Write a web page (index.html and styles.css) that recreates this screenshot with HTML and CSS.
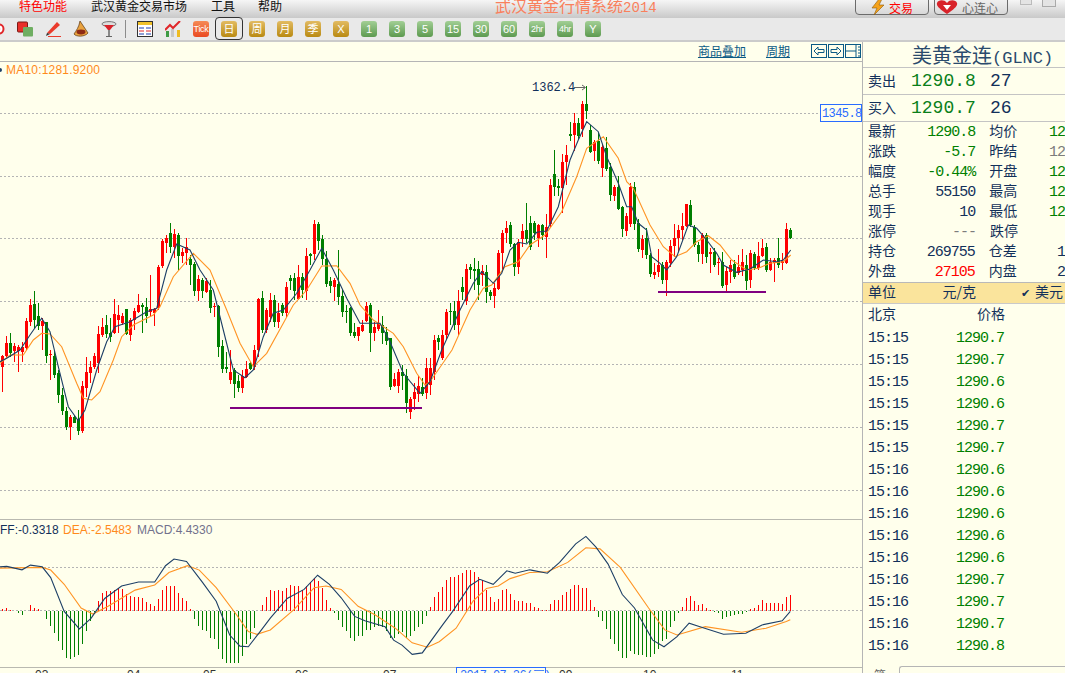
FILE: index.html
```html
<!DOCTYPE html>
<html lang="zh">
<head>
    <meta charset="utf-8">
    <title>武汉黄金行情系统2014</title>
    <link rel="stylesheet" href="styles.css">
</head>
<body>
    <!-- 菜单 -->
    <div class="menubar">
        <span class="menu menu-on">特色功能</span>
        <span class="menu">武汉黄金交易市场</span>
        <span class="menu">工具</span>
        <span class="menu menu-last">帮助</span>
        <span class="apptitle">武汉黄金行情系统<span class="apptitle-num">2014</span></span>
        <span class="topbtn topbtn-trade">
            <svg width="14" height="16" viewBox="0 0 14 16"><path d="M8 0 L1 9 H6 L3 16 L13 6 H8 L11 0 Z" fill="#f5a21a" stroke="#8a5a10" stroke-width=".6"/></svg>
            <span class="trade-txt">交易</span>
        </span>
        <span class="topbtn topbtn-heart">
            <svg width="22" height="14" viewBox="0 0 22 14"><path d="M11 14 C4 9 0 6 1 3 C2 0 8 -1 11 3 C14 -1 20 0 21 3 C22 6 18 9 11 14 Z" fill="#d8232a"/><path d="M7 5 H15 L11 10 Z" fill="#fff"/></svg>
            <span class="heart-txt">心连心</span>
        </span>
        <span class="winbtn"></span>
        <span class="winbtn winbtn-max"></span>
    </div>

    <!-- 工具栏 -->
    <div class="toolbar">
        <svg class="icon" viewBox="0 0 16 16"><circle cx="10" cy="8" r="4.5" fill="#fff" stroke="#e0262a" stroke-width="2"/><circle cx="10" cy="8" r="1.2" fill="#e0262a"/></svg>
        <svg class="icon" viewBox="0 0 16 16"><rect x="0.5" y="1" width="10" height="10" rx="1" fill="#e8302a" stroke="#7a1a16"/><rect x="6" y="6" width="10" height="9.5" rx="1" fill="#6fae62"/></svg>
        <svg class="icon" viewBox="0 0 16 16"><path d="M2 12 L12 1 L15 4 L5 13 Z" fill="#ea3b2c"/><path d="M2 12 L5 13 L1 15 Z" fill="#333"/><rect x="3" y="15" width="13" height="1" fill="#ea3b2c"/></svg>
        <svg class="icon" viewBox="0 0 16 16"><path d="M7 0 L15 12 C12 16 3 16 1 13 C3 10 6 6 7 0 Z" fill="#e9a33f" stroke="#5a3410" stroke-width=".7"/><ellipse cx="8" cy="11" rx="4.5" ry="2.4" fill="#8e2a14"/></svg>
        <svg class="icon" viewBox="0 0 16 16"><ellipse cx="8" cy="3" rx="7" ry="2.4" fill="#ddd" stroke="#777"/><path d="M3 4 H13 L9 9 H7 Z" fill="#d9222a"/><rect x="7" y="9" width="2" height="6" fill="#888"/><rect x="5" y="15" width="6" height="1" fill="#666"/></svg>
        <span class="tool-sep"></span>
        <svg class="icon" viewBox="0 0 16 16"><rect x="0.5" y="0.5" width="15" height="15" fill="#fff" stroke="#333"/><rect x="1" y="1" width="14" height="3" fill="#f1c22b"/><path d="M2 7 H7 M9 7 H14 M2 13 H7 M9 13 H14" stroke="#1a3fb0"/><path d="M2 10 H7 M9 10 H14" stroke="#e0262a"/></svg>
        <svg class="icon" viewBox="0 0 16 16"><rect x="1" y="10" width="3" height="6" fill="#3e9a45"/><rect x="6" y="8" width="3" height="8" fill="#c8c8c8"/><rect x="12" y="9" width="3" height="7" fill="#eebb22"/><path d="M0 9 L5 4 L8 7 L15 0" fill="none" stroke="#e0262a" stroke-width="2"/></svg>
        <span class="kbtn kbtn-tick">Tick</span>
        <span class="kbtn kbtn-gold kbtn-on">日</span>
        <span class="kbtn kbtn-gold">周</span>
        <span class="kbtn kbtn-gold">月</span>
        <span class="kbtn kbtn-gold">季</span>
        <span class="kbtn kbtn-gold">X</span>
        <span class="kbtn kbtn-green">1</span>
        <span class="kbtn kbtn-green">3</span>
        <span class="kbtn kbtn-green">5</span>
        <span class="kbtn kbtn-green">15</span>
        <span class="kbtn kbtn-green">30</span>
        <span class="kbtn kbtn-green">60</span>
        <span class="kbtn kbtn-green kbtn-small">2hr</span>
        <span class="kbtn kbtn-green kbtn-small">4hr</span>
        <span class="kbtn kbtn-green">Y</span>
    </div>

    <div class="main">
        <div class="chart">
            <div class="chart-head">
                <span class="headlink">商品叠加</span>
                <span class="headlink">周期</span>
                <span class="headicons">
                    <svg width="16" height="14" viewBox="0 0 16 14"><rect x=".5" y=".5" width="15" height="13" fill="none" stroke="#0b5a85"/><path d="M3 7 L7 3 V5.5 H13 V8.5 H7 V11 Z" fill="none" stroke="#0b5a85"/></svg>
                    <svg width="16" height="14" viewBox="0 0 16 14"><rect x=".5" y=".5" width="15" height="13" fill="none" stroke="#0b5a85"/><path d="M13 7 L9 3 V5.5 H3 V8.5 H9 V11 Z" fill="none" stroke="#0b5a85"/></svg>
                    <svg width="16" height="14" viewBox="0 0 16 14"><rect x=".5" y=".5" width="15" height="13" fill="none" stroke="#0b5a85"/><path d="M1 7 H11 M11 1 V13 M13 3 H15 M13 6 H15 M13 9 H15 M13 12 H15" stroke="#0b5a85"/></svg>
                </span>
            </div>
            <svg id="plot" class="plot" width="862" height="611" viewBox="0 62 862 611"></svg>
        </div>

        <div class="quote">
            <div class="quote-name">美黄金连<span class="quote-code">(GLNC)</span></div>
            <div class="ask-row"><span class="ask-label">卖出</span><span class="ask-price">1290.8</span><span class="ask-vol">27</span></div>
            <div class="ask-row"><span class="ask-label">买入</span><span class="ask-price">1290.7</span><span class="ask-vol">26</span></div>

            <div class="stats">
                <div class="stat"><span class="stat-l">最新</span><span class="stat-v c-green">1290.8</span><span class="stat-l2">均价</span><span class="stat-x c-green">12</span></div>
                <div class="stat"><span class="stat-l">涨跌</span><span class="stat-v c-green">-5.7</span><span class="stat-l2">昨结</span><span class="stat-x c-gray">12</span></div>
                <div class="stat"><span class="stat-l">幅度</span><span class="stat-v c-green">-0.44%</span><span class="stat-l2">开盘</span><span class="stat-x c-green">12</span></div>
                <div class="stat"><span class="stat-l">总手</span><span class="stat-v">55150</span><span class="stat-l2">最高</span><span class="stat-x c-green">12</span></div>
                <div class="stat"><span class="stat-l">现手</span><span class="stat-v">10</span><span class="stat-l2">最低</span><span class="stat-x c-green">12</span></div>
                <div class="stat"><span class="stat-l">涨停</span><span class="stat-v c-gray">---</span><span class="stat-l2">跌停</span><span class="stat-x"></span></div>
                <div class="stat"><span class="stat-l">持仓</span><span class="stat-v">269755</span><span class="stat-l2">仓差</span><span class="stat-x stat-x-far">1</span></div>
                <div class="stat"><span class="stat-l">外盘</span><span class="stat-v c-red">27105</span><span class="stat-l2">内盘</span><span class="stat-x stat-x-far">2</span></div>
            </div>

            <div class="unitbar">
                <span class="stat-l">单位</span>
                <span class="unit-val">元/克</span>
                <span class="unit-check">✔</span>
                <span class="unit-cur">美元</span>
            </div>

            <div class="tick-head"><span class="stat-l">北京</span><span class="tick-price-h">价格</span></div>
            <div class="tick"><span class="tick-t">15:15</span><span class="tick-p">1290.7</span></div>
            <div class="tick"><span class="tick-t">15:15</span><span class="tick-p">1290.7</span></div>
            <div class="tick"><span class="tick-t">15:15</span><span class="tick-p">1290.6</span></div>
            <div class="tick"><span class="tick-t">15:15</span><span class="tick-p">1290.6</span></div>
            <div class="tick"><span class="tick-t">15:15</span><span class="tick-p">1290.7</span></div>
            <div class="tick"><span class="tick-t">15:15</span><span class="tick-p">1290.7</span></div>
            <div class="tick"><span class="tick-t">15:16</span><span class="tick-p">1290.6</span></div>
            <div class="tick"><span class="tick-t">15:16</span><span class="tick-p">1290.6</span></div>
            <div class="tick"><span class="tick-t">15:16</span><span class="tick-p">1290.6</span></div>
            <div class="tick"><span class="tick-t">15:16</span><span class="tick-p">1290.6</span></div>
            <div class="tick"><span class="tick-t">15:16</span><span class="tick-p">1290.6</span></div>
            <div class="tick"><span class="tick-t">15:16</span><span class="tick-p">1290.7</span></div>
            <div class="tick"><span class="tick-t">15:16</span><span class="tick-p">1290.7</span></div>
            <div class="tick"><span class="tick-t">15:16</span><span class="tick-p">1290.7</span></div>
            <div class="tick"><span class="tick-t">15:16</span><span class="tick-p">1290.8</span></div>

            <div class="tabrow"><span class="tab-l">笔</span><span class="tab-box"></span></div>
        </div>
    </div>

    <script src="chart.js"></script>
</body>
</html>
```

FILE: styles.css
```css
html, body {
    margin: 0;
    padding: 0;
    width: 1065px;
    height: 673px;
    overflow: hidden;
    background: #ffffec;
    font-family: "Noto Sans CJK SC", sans-serif;
    font-size: 12px;
    color: #12305a;
}

/* top */
.menubar {
    display: flex;
    align-items: flex-start;
    height: 18px;
    padding-left: 19px;
    overflow: hidden;
    background: linear-gradient(#f6f6f6, #c9c9c9);
}
.menu {
    margin-right: 24px;
    line-height: 12px;
    color: #111;
}
.menu-on { color: #f00; }
.menu-last { margin-right: 0; margin-left: -1px; }
.apptitle {
    margin-left: 213px;
    margin-top: -3px;
    width: 164px;
    font-size: 16px;
    line-height: 17px;
    white-space: nowrap;
    color: #f9805c;
}
.apptitle-num { font-family: "Liberation Mono", monospace; font-size: 14px; }
.topbtn {
    display: flex;
    align-items: center;
    justify-content: center;
    gap: 4px;
    box-sizing: border-box;
    width: 74px;
    height: 21px;
    margin-top: -6px;
    margin-left: 5px;
    padding-top: 5px;
    border: 1px solid #6b6b6b;
    border-radius: 4px;
    background: linear-gradient(#f8f8f8, #d8d8d8);
    font-size: 12px;
}
.topbtn-trade { margin-left: 196px; }
.topbtn-heart { padding-right: 8px; }
.trade-txt { color: #f00; }
.heart-txt { color: #666; }
.winbtn {
    box-sizing: border-box;
    width: 12px;
    height: 9px;
    margin-top: -4px;
    margin-left: 12px;
    border: 1px solid #bbb;
    border-top: 0;
    background: #e4e4e4;
}
.winbtn-max { margin-left: 10px; width: 14px; height: 11px; border: 1px solid #aaa; }

.toolbar {
    display: flex;
    align-items: center;
    gap: 12px;
    height: 22px;
    margin-left: -11px;
    width: 1076px;
    background: #e9e9e9;
}
.icon { width: 16px; height: 16px; flex: none; }
.tool-sep {
    width: 1px;
    height: 18px;
    margin: 0 -1px 0 -4px;
    background: #8c8c8c;
}
.kbtn {
    position: relative;
    flex: none;
    width: 16px;
    height: 16px;
    border-radius: 3px;
    text-align: center;
    font-family: "Liberation Sans", "Noto Sans CJK SC", sans-serif;
    font-size: 11px;
    line-height: 16px;
    color: #fff;
}
.kbtn-gold { background: linear-gradient(#e2bb62, #b98a12); }
.kbtn-green { background: linear-gradient(#a2cf95, #5d9a50); }
.kbtn-tick {
    background: linear-gradient(#f58a55, #ea4a22);
    font-size: 9px;
    letter-spacing: -.3px;
}
.kbtn-small { font-size: 9px; letter-spacing: -.4px; }
.kbtn-on::before {
    content: "";
    position: absolute;
    top: -4px;
    bottom: -3px;
    left: -6px;
    right: -6px;
    border: 1px solid #333;
    border-radius: 4px;
    background: transparent;
}

.main {
    display: flex;
    height: 631px;
    border-top: 2px solid #cbcbcb;
}

/* chart */
.chart { width: 862px; flex: none; }
.chart-head {
    display: flex;
    justify-content: flex-end;
    align-items: center;
    box-sizing: border-box;
    height: 20px;
    border-bottom: 1px solid #b5b5b5;
    padding-top: 2px;
}
.headlink {
    margin-right: 20px;
    margin-bottom: 4px;
    color: #0b5a85;
    text-decoration: underline;
    line-height: 14px;
}
.headlink + .headlink { margin-right: 21px; }
.headicons { display: flex; gap: 1px; height: 14px; margin-top: -3px; margin-right: 1px; }
.plot { display: block; }
.grid { stroke: #b4b4b4; stroke-dasharray: 2 2; }
.rule { stroke: #b9b9b0; }
.up { fill: #f00; }
.down { fill: #007f00; }
.ma5 { fill: none; stroke: #1d3f66; stroke-width: 1.1; }
.ma10 { fill: none; stroke: #ff9424; stroke-width: 1.1; }
.mark { stroke: #800080; stroke-width: 2; shape-rendering: crispEdges; }
.lbl { font-family: "Liberation Sans", sans-serif; font-size: 12px; }
.lbl-ma { fill: #ff8a1c; }
.lbl-wide { letter-spacing: .2px; }
.lbl-dif { fill: #12305a; }
.lbl-mac { fill: #72728c; }
.lbl-price { font-family: "Liberation Mono", monospace; font-size: 12px; fill: #12305a; }
.lbl-axis { font-family: "Liberation Sans", sans-serif; font-size: 12px; fill: #333; }
.tag-box { fill: #ffffec; stroke: #2a6cff; }
.tag-txt { font-family: "Liberation Mono", monospace; font-size: 12px; letter-spacing: -.6px; fill: #2a6cff; }

/* quote panel */
.quote {
    box-sizing: border-box;
    width: 203px;
    flex: none;
    border-left: 1px solid #b5b5b5;
    font-size: 14px;
    overflow: hidden;
}
.quote-name {
    height: 25px;
    padding-left: 49px;
    font-size: 20px;
    line-height: 25px;
    color: #2a4a6c;
    white-space: nowrap;
}
.quote-code { font-family: "Liberation Mono", monospace; font-size: 17px; }
.ask-row {
    display: flex;
    align-items: center;
    height: 26px;
    padding-left: 5px;
    border-top: 1px solid #c4c4c4;
}
.ask-label { width: 43px; line-height: 26px; margin-bottom: 3px; }
.ask-price {
    width: 79px;
    margin-bottom: 1px;
    font-family: "Liberation Mono", monospace;
    font-size: 18px;
    color: #0a7f1a;
}
.ask-vol { margin-bottom: 1px; font-family: "Liberation Mono", monospace; font-size: 18px; }
.stats { border-top: 1px solid #c4c4c4; }
.stat {
    display: flex;
    align-items: center;
    height: 20px;
    padding-left: 5px;
    white-space: nowrap;
}
.stat-l { width: 42px; line-height: 20px; margin-bottom: 4px; }
.stat-v {
    width: 66px;
    text-align: right;
    font-family: "Liberation Mono", monospace;
    font-size: 15px;
    letter-spacing: -1px;
}
.stat-l2 { width: 60px; margin-left: 14px; margin-bottom: 4px; }
.stat-x {
    font-family: "Liberation Mono", monospace;
    font-size: 15px;
    letter-spacing: -1px;
}
.stat-x-far { margin-left: 9px; }
.c-green { color: #007f00; }
.c-red { color: #f00; }
.c-gray { color: #7c7c7c; }
.unitbar {
    display: flex;
    align-items: center;
    box-sizing: border-box;
    height: 22px;
    padding-left: 5px;
    background: #fae49c;
    border-top: 1px solid #b9b9b9;
    border-bottom: 1px solid #c9c9c9;
    white-space: nowrap;
}
.unit-val { width: 66px; margin-bottom: 4px; text-align: right; font-family: "Noto Sans CJK SC", sans-serif; }
.unit-check { margin-left: 45px; width: 14px; font-size: 11px; font-family: "DejaVu Sans", sans-serif; }
.unit-cur { margin-bottom: 4px; }
.tick-head { display: flex; height: 23px; padding-left: 5px; align-items: center; }
.tick-head .stat-l { margin-bottom: 6px; }
.tick-price-h { margin-left: 67px; margin-bottom: 6px; }
.tick {
    display: flex;
    align-items: center;
    height: 22px;
    padding-left: 5px;
    font-family: "Liberation Mono", monospace;
    font-size: 15px;
    letter-spacing: -1px;
}
.tick-t { width: 88px; }
.tick-p { color: #007f00; }
.tabrow { display: flex; align-items: flex-start; margin-top: 9px; padding-left: 11px; }
.tab-l { width: 25px; font-size: 12px; line-height: 12px; color: #666; margin-top: 3px; }
.tab-box {
    flex: 1;
    height: 20px;
    border: 1px solid #b5b5b5;
    border-radius: 3px 0 0 0;
    border-right: 0;
}
```

FILE: chart.js
```js
// 蜡烛图数据 [高, 实体上, 实体下, 低, 涨跌]
// left 的 y 是放大三倍后读的, y = 210 + v / 3
var left = [
    [435,437,472,545,'r'],[378,398,438,445,'r'],[370,398,430,440,'g'],[398,407,423,455,'r'],[405,410,422,485,'r'],
    [395,412,425,455,'r'],[323,333,413,420,'r'],[267,285,335,347,'r'],[243,282,330,355,'g'],[278,318,348,360,'g'],
    [323,332,348,420,'r'],[335,337,438,458,'g'],[420,432,435,510,'r'],[420,438,495,505,'g'],[480,490,555,580,'g'],
    [535,556,603,615,'g'],[590,603,650,660,'g'],[615,622,650,690,'r'],[615,622,640,640,'g'],[600,628,663,675,'g'],
    [513,528,663,670,'r'],[440,487,535,560,'r'],[453,472,490,520,'r'],[430,438,472,478,'r'],[348,372,460,490,'r'],
    [325,350,375,380,'r'],[315,345,372,385,'g'],[325,370,382,395,'g'],[267,312,368,372,'r'],[285,315,330,370,'r'],
    [310,318,338,345,'r'],[297,297,372,375,'g'],[325,330,375,392,'r'],[295,303,330,360,'r'],[252,285,305,310,'r'],
    [278,285,290,368,'g'],[265,290,318,340,'g'],[195,298,305,318,'r'],[295,298,310,348,'r'],[165,170,295,300,'r'],
    [88,92,168,175,'r'],[75,83,98,130,'r'],[40,68,110,130,'g'],[57,72,110,145,'r'],[70,75,137,180,'g'],
    [115,125,137,160,'r'],[85,112,130,165,'r'],[135,148,165,225,'g'],[155,163,243,258,'g'],[195,207,243,273,'r'],
    [205,210,243,265,'g'],[205,212,245,250,'r'],[210,240,293,310,'g'],[280,287,290,322,'r'],[285,288,410,440,'g'],
    [390,408,477,490,'g'],[425,472,477,490,'g'],[420,485,510,522,'r'],[475,480,522,563,'g'],[495,513,533,545,'g'],
    [480,497,533,548,'r'],[452,477,500,505,'r'],[455,458,477,480,'g'],[405,420,470,480,'r'],[265,267,420,440,'r'],
    [243,265,360,368,'g'],[295,300,360,370,'r'],[250,270,322,335,'r'],[255,270,335,350,'g'],[280,310,335,355,'r'],
    [280,285,310,318,'g'],[215,232,310,320,'r'],[195,203,213,240,'g'],[190,205,243,270,'g'],[165,202,268,270,'r'],
    [190,202,240,265,'g'],[115,137,243,270,'r'],[130,133,138,165,'g'],[30,42,133,150,'r'],[37,43,92,120,'g'],
    [75,88,148,165,'g'],[122,148,222,232,'g'],[200,212,228,250,'g'],[205,210,230,273,'r'],[120,222,262,285,'g'],
    [240,258,305,322,'g'],[285,302,305,340,'g'],[290,295,370,378,'g'],[340,365,378,385,'g'],[350,352,378,392,'r'],
    [330,345,362,365,'r'],[275,288,333,335,'r'],[278,285,368,425,'g'],[335,352,368,392,'r'],[300,340,358,362,'r'],
    [318,345,368,402,'g'],[350,365,392,405,'g'],[385,385,530,540,'g'],[488,507,528,530,'r'],[478,487,527,550,'r'],
    [465,487,497,540,'g'],[478,497,578,610,'g'],[560,567,605,628,'r'],[520,545,568,600,'r'],[498,528,552,575,'r'],
    [505,532,552,558,'g'],[445,475,550,568,'r']
];
// right 的 y 就是屏幕坐标
var right = [
    [358,368,385,395,'r'],[335,340,372,380,'r'],[335,338,342,350,'g'],[330,335,358,360,'r'],[309,312,335,340,'r'],
    [303,311,312,325,'g'],[301,311,325,330,'g'],[290,301,325,335,'r'],[277,287,292,300,'g'],[264,269,301,305,'r'],
    [264,267,270,279,'g'],[258,269,271,290,'g'],[261,269,285,300,'g'],[265,271,275,286,'r'],[265,272,292,303,'g'],
    [290,292,296,300,'g'],[283,288,296,308,'r'],[250,253,289,290,'r'],[230,233,253,270,'r'],[221,228,233,243,'r'],
    [222,225,244,247,'g'],[243,244,267,276,'g'],[239,242,267,274,'r'],[224,231,239,247,'r'],[203,230,239,243,'g'],
    [216,223,247,250,'g'],[221,223,233,240,'g'],[224,225,238,247,'r'],[224,225,235,240,'g'],[214,227,237,258,'r'],
    [179,185,224,227,'r'],[150,174,187,196,'g'],[179,186,188,196,'g'],[154,162,188,213,'r'],[145,155,162,185,'r'],
    [122,134,136,141,'g'],[113,123,135,151,'r'],[118,123,136,140,'g'],[101,104,129,137,'r'],[86,104,111,119,'g'],
    [125,130,152,153,'g'],[140,142,151,161,'r'],[132,141,161,164,'g'],[144,147,168,177,'r'],[137,148,169,171,'g'],
    [163,167,195,201,'g'],[185,187,196,201,'r'],[176,187,209,210,'g'],[206,207,229,237,'g'],[213,216,231,236,'r'],
    [183,187,224,227,'r'],[182,187,224,230,'g'],[219,223,249,252,'g'],[235,239,250,258,'r'],[228,238,255,259,'g'],
    [253,255,274,277,'g'],[263,272,275,279,'r'],[249,265,272,277,'r'],[262,265,280,284,'g'],[260,262,280,296,'r'],
    [240,246,263,267,'r'],[224,238,246,257,'r'],[225,230,238,252,'r'],[213,226,230,240,'r'],[204,204,226,227,'r'],
    [200,205,225,227,'g'],[225,227,245,247,'g'],[242,245,254,262,'g'],[233,235,254,264,'r'],[233,235,257,263,'g'],
    [248,252,254,273,'r'],[248,252,265,267,'g'],[258,262,263,275,'r'],[252,262,286,288,'g'],[267,271,285,293,'r'],
    [260,265,272,283,'r'],[260,264,277,279,'g'],[255,267,273,275,'r'],[249,262,270,276,'r'],[255,265,281,290,'g'],
    [250,253,280,288,'r'],[252,254,268,270,'g'],[242,256,268,270,'r'],[239,248,256,257,'r'],[243,247,270,272,'g'],
    [258,262,270,271,'r'],[258,260,263,282,'r'],[238,258,265,268,'g'],[253,261,263,270,'r'],[223,229,263,264,'r'],
    [228,230,238,239,'g']
];

// MACD 柱 (放大坐标里的高度, 正红负绿)
var bars = [3,6,2,1,-8,-12,-2,15,8,4,1,
    -26,-45,-68,-90,-118,-140,-143,-138,-133,-100,-60,-30,-3,
    28,52,58,58,62,68,65,50,42,40,40,38,25,20,14,35,62,72,72,72,52,36,28,4,
    -26,-45,-58,-62,-82,-85,-115,-143,-155,-155,-155,-155,-135,-100,-85,-52,0,
    15,40,60,58,60,58,68,76,74,72,62,74,85,95,88,68,30,7,
    -8,-28,-50,-62,-82,-90,-75,-75,-58,-58,-50,-45,-50,-60,-80,-80,-70,-65,-80,-75,-62,-50,-40,-15,10,
    40,55,70,90,100,100,105,110,120,120,115,100,90,60,40,25,35,60,63,50,30,28,28,22,22,10,8,2,2,20,30,30,45,55,65,75,75,68,68,32,10,
    -20,-32,-55,-85,-100,-120,-142,-142,-120,-128,-132,-132,-138,-138,-130,-115,-90,-85,-50,-30,-8,
    10,38,42,28,15,20,8,2,-3,-8,-25,-20,-15,-12,-10,-10,-3,5,8,15,30,22,22,22,22,20,40,45];

// 均线 [x, y] 放大坐标
var ma5a = [0,455,20,445,60,420,90,375,125,325,150,365,175,470,205,590,235,632,255,600,290,480,320,395,345,350,390,335,440,305,470,295,500,180,530,102,570,120,600,180,640,240,670,360,700,480,735,503,760,480,790,380,820,310,850,300,890,250,930,180,965,115,1000,180,1040,265,1080,340,1140,340,1170,395,1210,490,1260,550,1290,515];
var ma5b = [35,840,90,720,130,640,155,605,190,640,215,610,240,540,265,517,290,522,320,487,350,483,385,410,420,270,445,210,470,155,505,185,530,260,565,340,590,410,605,410,625,460,650,480,665,560,690,580,710,600,740,560,775,465,800,475,830,510,860,550,880,585,920,607,960,597,1000,570,1040,575,1060,570,1082,540];
var ma10a = [0,460,30,435,70,435,100,390,125,370,150,372,185,410,230,520,250,565,275,570,300,545,340,450,365,380,400,345,460,315,480,290,520,200,580,130,630,180,680,300,720,400,760,470,800,430,850,340,880,285,920,240,965,168,1010,167,1050,220,1080,285,1120,330,1180,370,1210,410,1250,490,1275,525,1290,515];
var ma10b = [66,840,120,720,160,655,185,645,225,590,265,575,300,525,345,495,395,425,440,320,470,235,520,200,565,265,590,335,610,355,660,465,700,530,735,560,770,545,800,515,835,497,870,525,905,570,950,600,985,595,1020,580,1060,575,1082,555];

var difa = [0,168,20,167,65,177,90,163,125,168,150,200,190,300,235,352,270,320,310,262,360,225,410,213,458,213,490,165,515,145,552,152,600,215,640,270,680,370,710,403,735,405,770,360,800,320,850,262,900,235,940,193,975,220,1010,260,1050,315,1080,328,1140,345,1165,385,1190,400,1220,427,1250,423,1310,340,1340,300,1390,225,1420,205,1460,220,1500,180,1525,187,1568,177];
var difb = [250,178,290,187,320,155,360,100,385,78,410,110,440,160,475,250,505,290,550,385,578,405,610,375,640,335,665,345,725,368,780,365,820,340,870,328,890,300];
var deaa = [0,172,125,170,150,178,190,220,240,290,275,308,320,285,400,237,458,222,500,185,555,165,590,178,640,230,700,310,735,360,760,368,800,355,870,295,930,230,965,225,1010,235,1060,285,1110,310,1170,350,1220,393,1265,406,1300,390,1350,350,1400,270,1440,232,1475,225,1510,203,1568,185];
var deab = [250,185,290,183,340,155,385,112,420,115,470,170,540,290,580,355,610,370,680,345,770,362,830,350,880,330,890,325];

function pts(list, x0, xs, y0, ys) {
    var out = '';
    for (var i = 0; i < list.length; i += 2) {
        out += (x0 + list[i] / xs).toFixed(1) + ',' + (y0 + list[i + 1] / ys).toFixed(1) + ' ';
    }
    return out;
}

function line(x1, y1, x2, y2, cls) {
    return '<line x1="' + x1 + '" y1="' + y1 + '" x2="' + x2 + '" y2="' + y2 + '" class="' + cls + '"/>';
}

function box(x, y, w, h, cls) {
    return '<rect x="' + x + '" y="' + y + '" width="' + w + '" height="' + h + '" class="' + cls + '" shape-rendering="crispEdges"/>';
}

function text(x, y, str, cls) {
    return '<text x="' + x + '" y="' + y + '" class="' + cls + '">' + str + '</text>';
}

function candle(i, c) {
    var x = 1 + 4 * i;
    var cls = c[4] == 'r' ? 'up' : 'down';
    var out = box(x + 1, c[0], 1, c[3] - c[0], cls);
    return out + box(x, c[1], 3, Math.max(c[2] - c[1], 1), cls);
}

var s = '';
var gy = [113.5, 176.5, 238.5, 301.5, 364.5, 427.5, 490.5];
for (var g = 0; g < gy.length; g++) {
    s += line(0, gy[g], 862, gy[g], 'grid');
}
s += line(0, 519.5, 862, 519.5, 'rule');
s += line(0, 567.5, 862, 567.5, 'grid');
s += line(0, 610.5, 862, 610.5, 'grid');
s += line(0, 667.5, 862, 667.5, 'rule');

for (var i = 0; i < left.length; i++) {
    var c = left[i];
    s += candle(i, [210 + c[0] / 3, 210 + c[1] / 3, 210 + c[2] / 3, 210 + c[3] / 3, c[4]]);
}
for (var j = 0; j < right.length; j++) {
    s += candle(left.length + j, right[j]);
}

s += '<polyline class="ma10" points="' + pts(ma10a, 0, 3, 210, 3) + pts(ma10b, 430, 3, 70, 3) + '"/>';
s += '<polyline class="ma5" points="' + pts(ma5a, 0, 3, 210, 3) + pts(ma5b, 430, 3, 70, 3) + '"/>';

s += line(230, 408, 422, 408, 'mark');
s += line(658, 292, 766, 292, 'mark');

// MACD
for (var b = 0; b < bars.length; b++) {
    var h = Math.abs(bars[b]) / 2.96;
    if (h < .5) continue;
    if (bars[b] > 0) {
        s += box(2 + 4 * b, 610.5 - h, 1, h, 'up');
    } else {
        s += box(2 + 4 * b, 610.5, 1, h, 'down');
    }
}
s += '<polyline class="ma10" points="' + pts(deaa, 0, 2.96, 510, 2.96) + pts(deab, 430, 2.47, 510, 2.96) + '"/>';
s += '<polyline class="ma5" points="' + pts(difa, 0, 2.96, 510, 2.96) + pts(difb, 430, 2.47, 510, 2.96) + '"/>';

// 文字
s += '<circle cx="0" cy="70" r="2" fill="#1d3f66"/>';
s += text(6, 74, 'MA10:1281.9200', 'lbl lbl-ma lbl-wide');
s += text(532, 91, '1362.4', 'lbl-price');
s += '<path d="M574 87.5 H585 M582 85 L585.5 87.5 L582 90" fill="none" stroke="#666"/>';
s += box(820.5, 104.5, 41, 17, 'tag-box');
s += text(822, 117, '1345.8', 'tag-txt');
s += text(0, 534, 'FF:-0.3318', 'lbl lbl-dif');
s += text(63, 534, 'DEA:-2.5483', 'lbl lbl-ma');
s += text(137, 534, 'MACD:4.4330', 'lbl lbl-mac');

var days = [[35, '03'], [127, '04'], [203, '05'], [295, '06'], [383, '07'], [559, '09'], [643, '10'], [731, '11']];
for (var d = 0; d < days.length; d++) {
    s += text(days[d][0], 679, days[d][1], 'lbl-axis');
}
s += box(456.5, 667.5, 89, 10, 'tag-box');
s += text(460, 679, '2017-07-26(三)', 'tag-txt');

document.getElementById('plot').innerHTML = s;
```
